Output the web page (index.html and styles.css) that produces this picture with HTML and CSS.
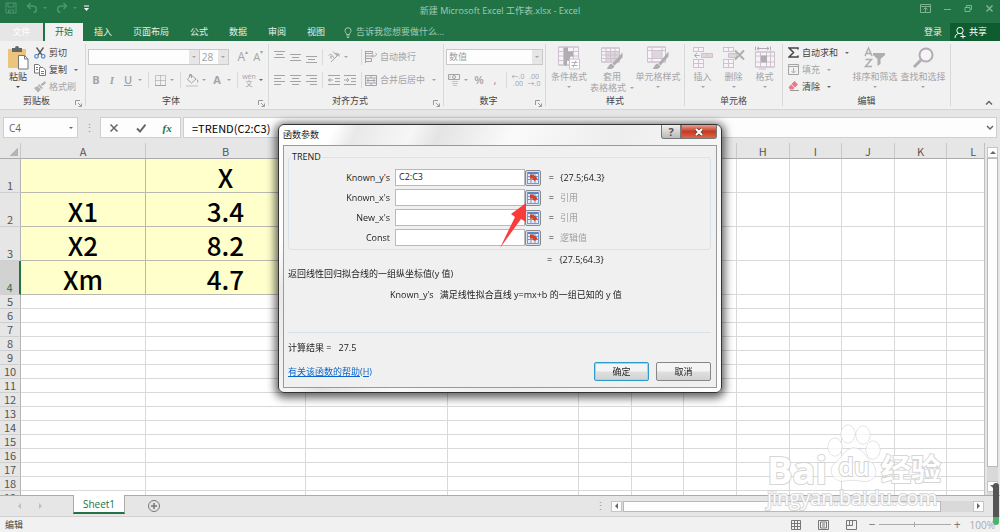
FILE: index.html
```html
<!DOCTYPE html>
<html lang="zh-CN">
<head>
    <meta charset="UTF-8">
    <meta name="viewport" content="width=device-width, initial-scale=1.0">
    <title>新建 Microsoft Excel 工作表.xlsx - Excel</title>
    <link rel="stylesheet" href="styles.css">
</head>
<body>
    <header class="titlebar">
        <div class="quick">
            <button class="qbtn" title="保存"><svg width="12" height="12" viewBox="0 0 12 12"><path d="M1 1h10v10H1zM3 1v4h6V1M3.500 11V8h5v3M5 9v2"/></svg></button>
            <button class="qbtn" title="撤消"><svg width="12" height="12" viewBox="0 0 12 12"><path d="M4.500 1L1.500 4l3 3M1.500 4h5c5 0 5 6 1 6.500" stroke-width="1.500"/></svg></button>
            <i class="caret"></i>
            <button class="qbtn redo" title="恢复"><svg width="12" height="12" viewBox="0 0 12 12"><path d="M7.500 1l3 3-3 3M10.500 4h-5c-5 0-5 6-1 6.500" stroke-width="1.500"/></svg></button>
            <i class="caret"></i>
            <button class="qbtn custom" title="自定义"><svg width="7" height="7" viewBox="0 0 7 7"><path d="M1 1h5"/><path class="solid" d="M1 3h5L3.500 6z"/></svg></button>
        </div>
        <h1 class="doc-title">新建 Microsoft Excel 工作表.xlsx - Excel</h1>
        <div class="winbtns">
            <button class="qbtn" title="功能区显示选项"><svg width="11" height="9" viewBox="0 0 11 9"><path d="M.5.5h10v8H.5zM.5 2.500h10M5.500 8V4M3.500 5.500l2-2 2 2"/></svg></button>
            <button class="qbtn" title="最小化"><svg width="9" height="9" viewBox="0 0 9 9"><path d="M1 5.500h7"/></svg></button>
            <button class="qbtn" title="还原"><svg width="9" height="9" viewBox="0 0 9 9"><path d="M1 3.500h5v4H1zM2.500 3V1.500h5v4H6.500"/></svg></button>
            <button class="qbtn" title="关闭"><svg width="9" height="9" viewBox="0 0 9 9"><path d="M1.500 1.500l6 6M7.500 1.500l-6 6" stroke-width="1.500"/></svg></button>
        </div>
    </header>

    <nav class="tabs">
        <button class="tab file">文件</button>
        <button class="tab active">开始</button>
        <button class="tab">插入</button>
        <button class="tab">页面布局</button>
        <button class="tab">公式</button>
        <button class="tab">数据</button>
        <button class="tab">审阅</button>
        <button class="tab">视图</button>
        <button class="tell"><svg width="8" height="11" viewBox="0 0 8 11"><path d="M2.500 7.500C2.500 6 1 5.500 1 3.700a3 3 0 0 1 6 0C7 5.500 5.500 6 5.500 7.500zM2.500 9h3M3 10.500h2"/></svg>告诉我您想要做什么...</button>
        <button class="login">登录</button>
        <button class="share"><svg width="12" height="13" viewBox="0 0 12 13"><circle cx="6" cy="4.500" r="3.200"/><path d="M1 12c0-3 2-4 3.500-4.500M7 7.500c1 .2 1.500.5 2 1M6.500 10.500h5M9 8.500v4"/></svg>共享</button>
    </nav>

    <section class="ribbon">
        <div class="group">
            <div class="body">
                <button class="big paste dark">
                    <svg width="22" height="24" viewBox="0 0 22 24"><path fill="#edc47c" d="M1 3h18v19H1z"/><path fill="#666" d="M5 2h3a2 2 0 0 1 4 0h3v4H5z"/><path fill="#fff" class="sheet-line" d="M11.500 9.500h6l3.500 3.500v10h-9.500z"/><path class="sheet-line" d="M17.500 9.500V13H21"/></svg>
                    <span>粘贴</span><i class="caret"></i>
                </button>
                <div class="stack">
                    <button class="row dark"><svg width="12" height="12" viewBox="0 0 12 12"><path fill="none" stroke="#555" stroke-width="1.300" d="M2.500.5L8 8M9.500.5L4 8"/><g fill="none" stroke="#4a86c5" stroke-width="1.200"><circle cx="2.500" cy="9.300" r="1.800"/><circle cx="9.200" cy="9.300" r="1.800"/></g></svg>剪切</button>
                    <button class="row dark"><svg width="12" height="12" viewBox="0 0 12 12"><path fill="#fff" stroke="#777" d="M.5.5h4l2 2V9h-6z"/><path fill="#fff" stroke="#777" d="M5.500 3.500h3.500l2.500 2.500v5.500h-6z"/><path stroke="#4a86c5" d="M2 3.500h2M2 5.500h2M7 7.500h3M7 9.500h3"/></svg>复制<i class="caret"></i></button>
                    <button class="row"><svg width="12" height="12" viewBox="0 0 12 12"><path fill="#b5b0b5" stroke="none" d="M11 0l1 2-3.500 3-2-1.500zM5 3l4 4-1.500 1L4 4.500zM3.500 5L7 8.500 4 11.500 0 7z"/></svg>格式刷</button>
                </div>
            </div>
            <footer class="dark has-launch">剪贴板<svg class="launch" width="7" height="7" viewBox="0 0 7 7"><path d="M.5 5V.5H5M3 3l3 3M6.500 3.500v3h-3"/></svg></footer>
        </div>

        <div class="group">
            <div class="body lines">
                <div class="line">
                    <span class="combo font-name"><select aria-label="字体" disabled><option></option></select><b><i class="caret"></i></b></span>
                    <span class="combo font-size"><select aria-label="字号" disabled><option>28</option></select><b><i class="caret"></i></b></span>
                    <button class="tool grow" title="增大字号">A<sup>▴</sup></button>
                    <button class="tool shrink" title="减小字号">A<sup>▾</sup></button>
                </div>
                <div class="line">
                    <button class="tool bold">B</button>
                    <button class="tool italic">I</button>
                    <button class="tool under">U</button>
                    <i class="drop"></i><i class="sep"></i>
                    <button class="tool" title="边框"><svg width="11" height="11" viewBox="0 0 11 11"><path d="M.5.5h10v10H.5zM0 5.500h11M5.500 0v10" opacity="0.6"/><path d="M0 10.500h11"/></svg></button>
                    <i class="drop"></i><i class="sep"></i>
                    <button class="tool" title="填充颜色"><svg width="13" height="13" viewBox="0 0 13 13"><path d="M5 1l5 4-4.500 4L1.500 5.500zM3.500 3V.500h2V4M11 5.500c2 2.500 0 3 0 3"/><path stroke="#ddd6dd" stroke-width="2" d="M0 12h12"/></svg></button>
                    <i class="drop"></i>
                    <button class="tool color-a">A</button>
                    <i class="drop"></i><i class="sep"></i>
                    <button class="tool pinyin" title="拼音"><small>wén</small><small>文</small></button>
                    <i class="drop on"></i>
                </div>
            </div>
            <footer class="dark has-launch">字体<svg class="launch" width="7" height="7" viewBox="0 0 7 7"><path d="M.5 5V.5H5M3 3l3 3M6.500 3.500v3h-3"/></svg></footer>
        </div>

        <div class="group">
            <div class="body lines">
                <div class="line">
                    <button class="tool" title="顶端对齐"><svg width="11" height="12" viewBox="0 0 11 12"><path d="M0 .5h11M2 3.500h7M0 6.500h11"/></svg></button>
                    <button class="tool" title="垂直居中"><svg width="11" height="12" viewBox="0 0 11 12"><path d="M0 3.500h11M2 6.500h7M0 9.500h11"/></svg></button>
                    <button class="tool" title="底端对齐"><svg width="11" height="12" viewBox="0 0 11 12"><path d="M0 5.500h11M2 8.500h7M0 11.500h11"/></svg></button>
                    <i class="sep"></i>
                    <span class="pair"><button class="tool" title="方向"><svg width="12" height="12" viewBox="0 0 12 12"><path d="M3 11l8-8M8.500 3H11v2.500M1 4.500c1-2 3-1 3.500.5L6 7M4 5.500C1.500 5 2 8 4 7M5 .5l4 4M7 3c1-2 3 0 1.500 1.500"/></svg></button><i class="drop"></i></span>
                    <i class="sep"></i>
                    <button class="row"><svg width="12" height="12" viewBox="0 0 12 12"><path d="M.5 0v12M.5.5h7v2h-7M.5 5h9c2.500 0 2.500-2.500 1-3M.5 7.500h6v3h-6M8 3.500L6.500 5 8 6.500"/></svg>自动换行</button>
                </div>
                <div class="line">
                    <button class="tool" title="左对齐"><svg width="11" height="10" viewBox="0 0 11 10"><path d="M0 .5h11M0 3.500h7M0 6.500h11M0 9.500h7"/></svg></button>
                    <button class="tool" title="居中"><svg width="11" height="10" viewBox="0 0 11 10"><path d="M0 .5h11M2 3.500h7M0 6.500h11M2 9.500h7"/></svg></button>
                    <button class="tool" title="右对齐"><svg width="11" height="10" viewBox="0 0 11 10"><path d="M0 .5h11M4 3.500h7M0 6.500h11M4 9.500h7"/></svg></button>
                    <i class="sep"></i>
                    <span class="pair"><button class="tool" title="减少缩进量"><svg width="12" height="10" viewBox="0 0 12 10"><path d="M0 .5h12M7 3.500h5M7 6.500h5M0 9.500h12M0 5h5M2.500 3L.5 5l2 2"/></svg></button><button class="tool" title="增加缩进量"><svg width="12" height="10" viewBox="0 0 12 10"><path d="M0 .5h12M7 3.500h5M7 6.500h5M0 9.500h12M0 5h5M3 3l2 2-2 2"/></svg></button></span>
                    <i class="sep"></i>
                    <button class="row"><svg width="12" height="11" viewBox="0 0 12 11"><path d="M.5.5h11v10H.5zM.5 3h11M.5 8h11M6 .5V3M6 8v2.500M2 5.500h8M3.500 4L2 5.500 3.500 7M8.500 4L10 5.500 8.500 7"/></svg>合并后居中<i class="caret"></i></button>
                </div>
            </div>
            <footer class="dark has-launch">对齐方式<svg class="launch" width="7" height="7" viewBox="0 0 7 7"><path d="M.5 5V.5H5M3 3l3 3M6.500 3.500v3h-3"/></svg></footer>
        </div>

        <div class="group">
            <div class="body lines">
                <div class="line">
                    <span class="combo number"><select aria-label="数字格式" disabled><option>数值</option></select><b><i class="caret"></i></b></span>
                </div>
                <div class="line">
                    <button class="tool" title="会计数字格式"><svg width="12" height="12" viewBox="0 0 12 12"><path d="M.5.5h11v5H.5z"/><circle cx="6" cy="3" r="1.500"/><path d="M4 7.500h6M4 9.500h6M5 11.500h4M2 1.500v3" opacity="0.6"/></svg></button>
                    <i class="drop"></i>
                    <button class="tool percent">%</button>
                    <button class="tool comma">,</button>
                    <i class="sep"></i>
                    <button class="tool decimal"><small>←.0</small><small>.00</small></button>
                    <button class="tool decimal"><small>.00</small><small>→.0</small></button>
                </div>
            </div>
            <footer class="dark has-launch">数字<svg class="launch" width="7" height="7" viewBox="0 0 7 7"><path d="M.5 5V.5H5M3 3l3 3M6.500 3.500v3h-3"/></svg></footer>
        </div>

        <div class="group">
            <div class="body">
                <button class="big cond"><svg width="22" height="23" viewBox="0 0 22 23"><path fill="#f8f3f8" d="M.5.500h20v18H.5z"/><path d="M.5.500h20v18H.5zM.5 5h20M.5 9.500h20M.5 14h20M5.500.5v18M15.500.5v18"/><path class="fill" d="M6 1h4v4H6zM6 5h9v5H6zM6 10h6v4H6zM6 14h3v5H6z"/><path fill="#fff" d="M11.500 12.500h10v10h-10z"/><path class="strong" d="M13.500 16h6M13.500 19h6M18 14l-3 7"/></svg><span>条件格式</span><i class="caret"></i></button>
                <button class="big format"><svg width="22" height="23" viewBox="0 0 22 23"><path fill="#f8f3f8" d="M.5 1.500h18v14H.5z"/><path class="pale" d="M5 5h13v10H5z"/><path d="M.5 1.500h18v14H.5zM.5 5h18M.5 8.500h18M.5 12h18M5 1.500v14M9.500 1.500v14M14 1.500v14"/><path class="fill" d="M21.500 6v5l-8 8-2-2zM10.500 17l3 3c-2 3-5 3-8 2 2-1 2-4 5-5z"/></svg><span>套用</span><span>表格格式<i class="caret"></i></span></button>
                <button class="big cellstyle"><svg width="22" height="23" viewBox="0 0 22 23"><path fill="#f8f3f8" d="M.5.500h18v15H.5z"/><path class="pale" d="M5 4h10v8H5z"/><path d="M.5.500h18v15H.5zM.5 4h18M.5 12h18M5 .5v15M15 .5v15"/><path class="fill" d="M21.500 5v5l-8 9-2-2zM10.500 17l3 3c-2 3-5 3-8 2 2-1 2-4 5-5z"/></svg><span>单元格样式</span><i class="caret"></i></button>
            </div>
            <footer class="dark">样式</footer>
        </div>

        <div class="group">
            <div class="body">
                <button class="big cell"><svg width="20" height="22" viewBox="0 0 20 22"><path fill="#f8f3f8" d="M.5.500h10v4H.5zM.5 12.500h10v8H.5z"/><path d="M.5.500h10v4H.5zM5.500.5v4M.5 12.500h10v8H.5zM5.500 12.500v8M.5 16.500h10"/><path class="pale" d="M8.500 6.500h11v4h-11z"/><path d="M8.500 6.500h11v4h-11zM14 6.500v4"/><path class="strong" d="M1.500 8.500h5M4 6L1.500 8.500 4 11"/></svg><span>插入</span><i class="caret"></i></button>
                <button class="big cell"><svg width="22" height="22" viewBox="0 0 22 22"><path fill="#f8f3f8" d="M.5.500h10v4H.5zM.5 12.500h10v8H.5z"/><path d="M.5.500h10v4H.5zM5.500.5v4M.5 12.500h10v8H.5zM5.500 12.500v8M.5 16.500h10"/><path class="pale" d="M5 6.500h9v4H5z"/><path d="M5.500 6.500h8v4h-8z"/><path class="strong thick" d="M12 3.500l9 9M21 3.500l-9 9"/></svg><span>删除</span><i class="caret"></i></button>
                <button class="big cell"><svg width="20" height="23" viewBox="0 0 20 23"><path class="strong" d="M.5 0v4M15.500 0v4M2 2h12M4 .5L2 2l2 1.500M12 .5L14 2l-2 1.500"/><path fill="#f8f3f8" d="M.5 5.500h19v15H.5z"/><path d="M.5 5.500h19v15H.5zM.5 9.500h19M.5 15.500h19M5.500 5.500v15M11.500 5.500v15M15.500 5.500v15M4 22.500h7"/><path class="fill" d="M6 9h6v7H6z"/></svg><span>格式</span><i class="caret"></i></button>
            </div>
            <footer class="dark">单元格</footer>
        </div>

        <div class="group">
            <div class="body">
                <div class="stack edit">
                    <button class="row dark"><svg width="11" height="11" viewBox="0 0 11 11"><path fill="none" stroke="#444" stroke-width="1.500" d="M10 2.500V1H1l4.500 4.500L1 10h9V8.500"/></svg>自动求和<i class="caret"></i></button>
                    <button class="row"><svg width="11" height="11" viewBox="0 0 11 11"><path d="M.5.500h10v10H.5zM.5 2.500h10"/><path class="strong" d="M5.500 4v5M3.500 7l2 2 2-2"/></svg>填充<i class="caret"></i></button>
                    <button class="row dark"><svg width="11" height="11" viewBox="0 0 11 11"><path fill="#e8788a" stroke="none" d="M6.500 0L10 3.500 7 6.500 3.500 3z"/><path fill="#e8788a" stroke="none" d="M3 3.500L6.500 7 5 8.500H2L.5 6.500z"/><path stroke="#999" d="M2 9.500h9"/></svg>清除<i class="caret"></i></button>
                </div>
                <button class="big find"><svg width="22" height="22" viewBox="0 0 22 22"><path class="strong" stroke-width="1.500" d="M1 9l3.500-8L8 9M2.500 6.500h4M1.500 12.500h6l-6 7h6.500"/><path class="fill" d="M9 6h12v2l-4.500 4v5l-3 2v-7L9 8z"/></svg><span>排序和筛选</span><i class="caret"></i></button>
                <button class="big find"><svg width="22" height="22" viewBox="0 0 22 22"><circle cx="14" cy="8" r="6.500" fill="#f8f3f8" class="strong thick"/><path class="strong" stroke-width="3" d="M9 13l-7 7"/></svg><span>查找和选择</span><i class="caret"></i></button>
            </div>
            <footer class="dark">编辑</footer>
        </div>
        <button class="collapse" title="折叠功能区"><svg width="8" height="6" viewBox="0 0 8 6"><path d="M1 4.500l3-3 3 3" stroke-width="1.500"/></svg></button>
    </section>

    <section class="formula-bar">
        <div class="name-box"><input aria-label="名称框" value="C4"><i class="caret"></i></div>
        <span class="grip">⋮</span>
        <div class="fx-buttons">
            <button title="取消"><svg width="10" height="10" viewBox="0 0 10 10"><path d="M1.500 1.500l7 7M8.500 1.500l-7 7" stroke-width="1.500"/></svg></button>
            <button title="输入"><svg width="10" height="10" viewBox="0 0 10 10"><path d="M1 5.500L4 8.500 9.500 1.500" stroke-width="2"/></svg></button>
            <button class="fx" title="插入函数">fx</button>
        </div>
        <div class="formula"><input aria-label="编辑栏" value="=TREND(C2:C3)"><svg width="8" height="6" viewBox="0 0 8 6"><path d="M1 1l3 3 3-3" stroke-width="1.500"/></svg></div>
    </section>

    <main class="workbook">
        <div class="sheet">
            <table>
                <colgroup><col class="c-num"><col class="c-a"><col class="c-b"><col class="c-c"><col class="c-d"><col><col><col><col><col><col><col><col></colgroup>
                <thead>
                    <tr><th class="corner"></th><th>A</th><th>B</th><th>C</th><th>D</th><th>E</th><th>F</th><th>G</th><th>H</th><th>I</th><th>J</th><th>K</th><th>L</th></tr>
                </thead>
                <tbody id="rows"></tbody>
            </table>
        </div>
        <div class="vscroll">
            <button class="arrow" title="向上"><i class="tri up"></i></button>
            <span class="thumb"></span>
            <button class="arrow" title="向下"><i class="tri down"></i></button>
        </div>
    </main>

    <section class="sheetbar">
        <button class="nav" title="上一个"><i class="tri left"></i></button>
        <button class="nav" title="下一个"><i class="tri right"></i></button>
        <button class="sheet-tab">Sheet1</button>
        <button class="add" title="新工作表"><svg width="12" height="12" viewBox="0 0 12 12"><circle cx="6" cy="6" r="5.500"/><path stroke-width="1.500" d="M6 3v6M3 6h6"/></svg></button>
        <span class="grip">⋮</span>
        <div class="hscroll">
            <button class="arrow" title="向左"><i class="tri left"></i></button>
            <span class="thumb"></span>
            <button class="arrow" title="向右"><i class="tri right"></i></button>
        </div>
    </section>

    <footer class="status">
        <span class="mode">编辑</span>
        <button title="普通"><svg width="10" height="10" viewBox="0 0 10 10"><path d="M.5.500h9v9h-9zM.5 3.500h9M.5 6.500h9M3.500.5v9M6.500.5v9"/></svg></button>
        <button title="页面布局"><svg width="11" height="10" viewBox="0 0 11 10"><path d="M.5.500h10v9H.5zM2.500 2v6h6V2zM4 4h3M4 6h3"/></svg></button>
        <button title="分页预览"><svg width="11" height="10" viewBox="0 0 11 10"><path d="M.5.500h10v9H.5zM3.500.5v5h3v-5M.5 5.500h6"/></svg></button>
        <div class="zoom"><span>−</span><i class="rail"></i><span>+</span></div>
        <span class="pct">100%</span>
    </footer>

    <div class="watermark">
        <div class="brand">
            <span>Bai</span>
            <svg width="54" height="60" viewBox="0 0 54 60"><ellipse cx="8" cy="24" rx="7" ry="9"/><ellipse cx="21" cy="11" rx="7" ry="9"/><ellipse cx="36" cy="12" rx="7" ry="9"/><ellipse cx="46" cy="27" rx="7" ry="9"/><path d="M27 25c-9 0-12 10-19 15-7 6-3 17 6 18 5 0 9-1 13-1s9 2 14 1c9-2 10-12 4-18-6-5-9-15-18-15z"/><text x="27" y="53" text-anchor="middle">du</text></svg>
            <span class="cn">经验</span>
        </div>
        <div class="site">jingyan.baidu.com</div>
    </div>
    <div class="pill"></div>

    <form class="dialog" role="dialog" aria-labelledby="dlg-title">
        <div class="dlg-head">
            <h2 id="dlg-title">函数参数</h2>
            <button type="button" class="help">?</button>
            <button type="button" class="close" title="关闭"><svg width="10" height="8" viewBox="0 0 10 8"><path d="M2 1l6 6M8 1L2 7" stroke="#65382f" stroke-width="3.500"/><path d="M2 1l6 6M8 1L2 7" stroke="#fff" stroke-width="2"/></svg></button>
        </div>
        <div class="dlg-body">
            <fieldset>
                <legend>TREND</legend>
                <div class="arg"><label for="ky">Known_y's</label><input id="ky" value="C2:C3" autofocus><button type="button" class="pick" title="选择区域"><svg width="12" height="12"><use href="#ref"/></svg></button><b>=</b><output>{27.5;64.3}</output></div>
                <div class="arg"><label for="kx">Known_x's</label><input id="kx"><button type="button" class="pick" title="选择区域"><svg width="12" height="12"><use href="#ref"/></svg></button><b>=</b><output class="hint">引用</output></div>
                <div class="arg"><label for="nx">New_x's</label><input id="nx"><button type="button" class="pick" title="选择区域"><svg width="12" height="12"><use href="#ref"/></svg></button><b>=</b><output class="hint">引用</output></div>
                <div class="arg"><label for="co">Const</label><input id="co"><button type="button" class="pick" title="选择区域"><svg width="12" height="12"><use href="#ref"/></svg></button><b>=</b><output class="hint">逻辑值</output></div>
            </fieldset>
            <div class="total"><b>=</b><output>{27.5;64.3}</output></div>
            <p class="about">返回线性回归拟合线的一组纵坐标值(y 值)</p>
            <p class="arg-help"><span>Known_y's</span><span>满足线性拟合直线 y=mx+b 的一组已知的 y 值</span></p>
            <p class="answer">计算结果 =<span>27.5</span></p>
            <div class="actions">
                <a href="#">有关该函数的帮助(H)</a>
                <button type="submit" class="btn primary">确定</button>
                <button type="button" class="btn">取消</button>
            </div>
        </div>
        <svg class="pointer" width="28" height="46" viewBox="0 0 28 46"><path d="M26 0L11 11l4 3L0 45l21-29 5 3z"/></svg>
    </form>

    <svg class="defs" width="0" height="0">
        <symbol id="ref" viewBox="0 0 12 12">
            <path fill="#e3ecf8" d="M0 0h12v12H0z"/>
            <path fill="#5d86c4" d="M0 0h12v2H0z"/>
            <path fill="none" stroke="#7599d0" d="M.5 0v12M4 2v10M8 2v10M11.500 0v12M0 4.500h12M0 7.500h12M0 11.500h12"/>
            <path fill="#d9401f" d="M3 2.500h4v2l1-1 2.500 3L8 9 5.500 7.500 6 6.500H3z"/>
        </symbol>
    </svg>

    <script>
const data = [
    ["", "X"],
    ["X1", "3.4"],
    ["X2", "8.2"],
    ["Xm", "4.7"]
];
const columnCount = 12;
const rowCount = 19;
const rows = document.getElementById("rows");

for (let r = 0; r < rowCount; r++) {
    const tr = rows.insertRow();
    const head = document.createElement("th");
    head.textContent = r + 1;
    tr.appendChild(head);
    if (r < data.length) tr.className = "tall";
    if (r === 3) tr.classList.add("current");
    for (let c = 0; c < columnCount; c++) {
        const td = tr.insertCell();
        // the first three columns hold the shaded table
        if (r < data.length && c < 3) {
            td.className = "shaded";
            td.textContent = data[r][c] || "";
        }
    }
}

const known = document.getElementById("ky");
known.setSelectionRange(known.value.length, known.value.length);
    </script>
</body>
</html>
```
FILE: styles.css
```css
* {
  box-sizing: border-box;
}

body {
  margin: 0;
  height: 100vh;
  display: flex;
  flex-direction: column;
  overflow: hidden;
  background: #e6e6e6;
  color: #444;
  font-family: "Open Sans", "Noto Sans CJK SC", sans-serif;
  font-size: 9px;
  line-height: 12px;
}

button, input, select {
  font: inherit;
  color: inherit;
  margin: 0;
  padding: 0;
  border: none;
  outline: none;
  background: none;
}

h1, h2, p {
  margin: 0;
  font-size: inherit;
  font-weight: normal;
}

svg {
  flex: none;
  fill: none;
  stroke: currentColor;
}

.defs {
  position: absolute;
}

.caret {
  flex: none;
  display: inline-block;
  border: 2px solid transparent;
  border-top-color: currentColor;
  border-bottom: none;
}

.dark {
  color: #444;
}

/* title bar */
.titlebar {
  display: grid;
  grid-template-columns: 1fr auto 1fr;
  align-items: start;
  height: 23px;
  background: #217346;
  color: #7db393;
}

.quick, .winbtns {
  display: flex;
  align-items: center;
  height: 16px;
}

.quick {
  gap: 5px;
  padding-left: 5px;
  color: #4f9470;
}

.qbtn {
  display: flex;
}

.quick .qbtn:nth-child(2) {
  margin-left: 4px;
}

.quick .redo {
  margin-left: 4px;
}

.quick .custom {
  margin-left: 1px;
  color: #fff;
}

.solid {
  fill: currentColor;
  stroke: none;
}

.doc-title {
  padding-top: 5px;
  color: #a3cab3;
}

.winbtns {
  justify-content: flex-end;
  gap: 12px;
  padding-right: 6px;
}

/* ribbon tabs */
.tabs {
  display: flex;
  align-items: stretch;
  gap: 1px;
  height: 18px;
  background: #217346;
  color: #e4f1ea;
}

.tab {
  padding: 0 10px;
}

.tab.file {
  width: 43px;
  margin-right: 1px;
  background: #e6e6e6;
  color: #fff;
}

.tab.active {
  background: #f1f1f1;
  color: #217346;
}

.tell {
  display: flex;
  align-items: center;
  gap: 4px;
  padding-left: 8px;
  color: #a3cab3;
}

.login {
  margin-left: auto;
  padding: 0 7px;
}

.share {
  display: flex;
  align-items: center;
  gap: 3px;
  width: 50px;
  padding-left: 4px;
  background: #0e5c2f;
  color: #fff;
}

/* ribbon */
.ribbon {
  display: grid;
  grid-template-columns: 86px 183px 175px 102px 139px 98px 168px 1fr;
  height: 69px;
  padding-top: 3px;
  background: #f1f1f1;
  border-bottom: 1px solid #d5d5d5;
  color: #a6a3a6;
}

.group {
  display: flex;
  flex-direction: column;
  margin-bottom: 3px;
  border-right: 1px solid #d8d8d8;
  padding: 0 2px;
}

.body {
  display: flex;
  flex: 1;
}

.group footer {
  position: relative;
  height: 12px;
  margin-bottom: -1px;
  text-align: center;
}

.group .has-launch {
  padding-right: 12px;
}

.launch {
  position: absolute;
  right: 1px;
  bottom: 0;
  color: #999;
}

.big {
  display: flex;
  flex-direction: column;
  align-items: center;
  padding-top: 2px;
  white-space: nowrap;
}

.big svg {
  height: 24px;
  margin-bottom: 1px;
  stroke: #cdc2cd;
}

.big svg .fill {
  fill: #b0adb0;
  stroke: none;
}

.big svg .pale {
  fill: #ddd6dd;
  stroke: none;
}

svg .strong {
  stroke: #b0adb0;
}

svg .thick {
  stroke-width: 2;
}

.big > span {
  line-height: 11px;
}

.big > .caret {
  margin-top: 4px;
}

.big span .caret {
  margin: 0 0 2px 4px;
}

.big.paste svg {
  stroke: none;
}

.sheet-line {
  stroke: #777;
}

.paste { width: 32px; }
.cond { width: 42px; }
.format { width: 44px; }
.cellstyle { width: 48px; }
.cell { width: 31px; }
.find { width: 48px; }

.stack {
  display: flex;
  flex-direction: column;
}

.stack .row {
  height: 17px;
}

.stack.edit {
  width: 66px;
  padding-left: 3px;
}

.row {
  display: flex;
  align-items: center;
  gap: 3px;
  white-space: nowrap;
}

.row .caret {
  margin-left: 4px;
}

.lines {
  flex-direction: column;
  gap: 7px;
  padding-top: 5px;
}

.line {
  display: flex;
  align-items: center;
  height: 16px;
}

.tool {
  display: flex;
  align-items: center;
  justify-content: center;
  width: 16px;
  height: 16px;
  font-size: 11px;
}

.drop {
  width: 9px;
  padding-left: 2px;
}

.drop::before {
  content: "";
  display: block;
  width: 0;
  border: 2px solid transparent;
  border-top-color: currentColor;
  border-bottom: none;
}

.drop.on {
  color: #666;
}

.sep {
  width: 1px;
  height: 16px;
  margin: 0 3px;
  background: #dadada;
}

.pair {
  display: flex;
  align-items: center;
  width: 32px;
}

.bold { font-weight: bold; }
.italic { font-family: "Liberation Serif", serif; font-style: italic; font-weight: bold; }
.under { text-decoration: underline; font-weight: 600; }
.color-a { font-weight: bold; }
.percent, .comma { font-weight: 600; }

.grow {
  margin-left: 6px;
  font-size: 12px;
}

.tool sup {
  font-size: 6px;
  line-height: 6px;
  align-self: flex-start;
}

.pinyin, .decimal {
  flex-direction: column;
}

.tool small {
  font-size: 7px;
  line-height: 7px;
}

.combo {
  display: flex;
  height: 16px;
  border: 1px solid #c9c9c9;
  background: #fdfdfd;
}

.combo select {
  flex: 1;
  min-width: 0;
  appearance: none;
  padding-left: 2px;
  opacity: 1;
  color: #a0a0a0;
}

.combo b {
  display: flex;
  align-items: center;
  justify-content: center;
  width: 10px;
  background: #e6e6e6;
}

.font-name { width: 115px; }
.font-size { width: 31px; margin-left: -1px; font-size: 10px; }
.number { width: 97px; }

.collapse {
  align-self: end;
  justify-self: end;
  margin-right: 7px;
  color: #666;
}

/* formula bar */
.formula-bar {
  display: flex;
  height: 33px;
  padding: 7px 3px 5px;
  color: #666;
}

.name-box, .fx-buttons, .formula {
  display: flex;
  align-items: center;
  background: #fdfdfd;
  border: 1px solid #cfcfcf;
}

.name-box {
  width: 75px;
  padding-right: 4px;
}

.name-box input {
  flex: 1;
  min-width: 0;
  padding-left: 5px;
  font-size: 10px;
}

.name-box .caret, .row.dark .caret {
  color: #666;
}

.grip {
  width: 22px;
  align-self: center;
  text-align: center;
  font-size: 11px;
  color: #999;
}

.fx-buttons {
  width: 81px;
  margin-right: 2px;
  justify-content: space-around;
}

.fx-buttons button {
  display: flex;
}

.fx-buttons .fx {
  font: italic bold 11px "Liberation Serif", serif;
  color: #217346;
}

.formula {
  flex: 1;
  padding-right: 2px;
}

.formula input {
  flex: 1;
  min-width: 0;
  padding-left: 8px;
  font: 400 11px "Noto Sans CJK SC", sans-serif;
  color: #000;
}

/* sheet */
.workbook {
  display: flex;
  flex: 1;
  min-height: 0;
  border-bottom: 1px solid #ababab;
}

.sheet {
  flex: 1;
  overflow: hidden;
  background: #fff;
  border-right: 1px solid #c0c0c0;
}

/* the last column runs on under the scroll bar */
.sheet table {
  width: calc(100% + 16px);
  table-layout: fixed;
  border-spacing: 0;
  font-family: "Noto Sans CJK SC", sans-serif;
}

.c-num { width: 21px; }
.c-a { width: 125px; }
.c-b { width: 160px; }
.c-c { width: 142px; }
.c-d { width: 131px; }

.sheet th {
  padding: 0;
  background: #e6e6e6;
  border-right: 1px solid #b4b4b4;
  font-size: 11px;
  line-height: 13px;
  font-weight: normal;
  color: #555;
}

.sheet thead th {
  height: 16px;
  padding-top: 2px;
  border-right-color: #c8c8c8;
  border-bottom: 1px solid #ababab;
}

.sheet .corner {
  background: linear-gradient(135deg, transparent 50%, #b4b4b4 50%) 10px 5px / 8px 8px no-repeat #e6e6e6;
}

.sheet tbody th {
  height: 14px;
  border-bottom: 1px solid #cfcfcf;
  vertical-align: bottom;
}

.sheet td {
  padding: 0;
  border-right: 1px solid #d9d9d9;
  border-bottom: 1px solid #d9d9d9;
}

.sheet .tall th {
  height: 34px;
}

.sheet .shaded {
  padding-top: 2px;
  background: #ffffcc;
  border-color: #b9b9b0;
  color: #000;
  font-size: 26px;
  line-height: 31px;
  font-weight: 500;
  text-align: center;
}

.sheet .current th {
  background: #d2d2d2;
  border-right: 2px solid #217346;
  color: #217346;
}

.tri {
  display: block;
  width: 0;
  height: 0;
  border: 3px solid transparent;
}

.tri.up { border-bottom-color: #666; border-top: none; }
.tri.down { border-top-color: #666; border-bottom: none; }
.tri.left { border-right-color: #666; border-left: none; }
.tri.right { border-left-color: #666; border-right: none; }

.arrow {
  display: flex;
  align-items: center;
  justify-content: center;
  width: 11px;
  height: 11px;
  flex: none;
  background: #fdfdfd;
  border: 1px solid #c6c6c6;
}

.thumb {
  background: #fdfdfd;
  border: 1px solid #b9b9b9;
}

.vscroll {
  display: flex;
  flex-direction: column;
  width: 15px;
  padding: 4px 2px 3px;
  background: linear-gradient(#d9d9d9, #d9d9d9) center 100% / 11px 40px no-repeat;
}

.vscroll .thumb {
  flex: 1;
  width: 11px;
  margin-bottom: 14px;
}

/* sheet tabs */
.sheetbar {
  display: flex;
  align-items: center;
  height: 20px;
}

.nav {
  width: 21px;
  padding-left: 18px;
  opacity: 0.3;
}

.sheet-tab {
  align-self: flex-start;
  width: 52px;
  height: 19px;
  margin: -1px 23px 0 31px;
  background: #fff;
  border: 1px solid #ababab;
  border-top: none;
  border-bottom: 2px solid #217346;
  font-size: 10px;
  color: #217346;
}

.add {
  display: flex;
  color: #777;
}

.sheetbar .grip {
  margin-left: auto;
}

.hscroll {
  display: flex;
  flex: 0 0 373px;
  margin-right: 16px;
  background: #d9d9d9;
}

.hscroll .thumb {
  flex: 1;
  margin: 0 32px 0 1px;
}

/* status bar */
.status {
  display: flex;
  align-items: center;
  gap: 17px;
  height: 16px;
  padding: 0 5px;
  background: #f1f1f1;
  border-top: 1px solid #d0d0d0;
}

.status button {
  display: flex;
  color: #777;
}

.mode {
  margin-right: auto;
}

.zoom {
  display: flex;
  align-items: center;
  gap: 3px;
  margin-left: -5px;
  font-size: 12px;
  color: #777;
}

.rail {
  width: 72px;
  height: 5px;
  background: linear-gradient(#aaa, #aaa) center / 1px 5px no-repeat, linear-gradient(#aaa, #aaa) center / 100% 1px no-repeat;
}

.pct {
  margin-left: -8px;
  font-size: 10px;
  color: #aaa;
}

.pill {
  position: absolute;
  right: 1px;
  bottom: 7px;
  width: 6px;
  height: 42px;
  border-radius: 3px;
  background: linear-gradient(#555 80%, #4bb269 80%);
}

/* watermark */
.watermark {
  position: absolute;
  right: 50px;
  bottom: 24px;
  width: 183px;
  font-family: "Open Sans", "Noto Sans CJK SC", sans-serif;
  color: #fff;
  -webkit-text-stroke: 2px #d2d2d2;
  paint-order: stroke fill;
  opacity: 0.9;
}

.brand {
  display: flex;
  align-items: flex-end;
  height: 60px;
  margin-bottom: 5px;
  font-size: 38px;
  line-height: 28px;
  font-weight: bold;
}

.brand svg {
  fill: rgba(255, 255, 255, 0.8);
  stroke: #cfcfcf;
}

.brand text {
  fill: #fff;
  stroke: #cfcfcf;
  stroke-width: 2px;
  paint-order: stroke fill;
  font-size: 25px;
  font-weight: 600;
}

.brand .cn {
  font-size: 30px;
}

.site {
  font-size: 20px;
  line-height: 20px;
}

/* function arguments dialog */
.dialog {
  position: absolute;
  left: 278px;
  top: 124px;
  width: 444px;
  padding: 0 4px 4px;
  border: 1px solid #333;
  border-radius: 6px;
  background: linear-gradient(115deg, #fff 10%, #e9e9e9 14%, #f6f6f6 24%, #e4e4e4 29%, #fafafa 42%, #eee 60%, #fff 100%);
  box-shadow: 0 2px 9px 3px rgba(0, 0, 0, 0.6);
  color: #1c1c1c;
}

.dlg-head {
  display: flex;
  align-items: flex-start;
  height: 20px;
}

.dlg-head h2 {
  flex: 1;
  padding-top: 4px;
}

.dlg-head button {
  display: flex;
  align-items: center;
  justify-content: center;
  height: 14px;
  border: 1px solid #777;
  border-top: none;
}

.help {
  width: 20px;
  background: linear-gradient(#eee, #bbb);
  border-radius: 0 0 0 3px;
  font-weight: bold;
  font-size: 11px;
  color: #555;
}

.close {
  width: 36px;
  background: linear-gradient(#e8a193, #c53a22 50%, #d9694c);
  border-radius: 0 0 3px 0;
}

.dlg-body {
  padding: 5px 5px 6px 4px;
  background: #f0f0f0;
  border: 1px solid #999;
}

.dialog b {
  font-weight: normal;
}

fieldset {
  margin: 0;
  padding: 6px 0 0;
  border: 1px solid #dbe2e8;
  border-radius: 3px;
}

legend {
  margin-left: 2px;
  padding: 0 1px;
}

.arg {
  display: grid;
  grid-template-columns: 101px 130px 16px 18px 1fr;
  align-items: center;
  margin-bottom: 3px;
}

.arg label {
  text-align: right;
}

.arg input {
  height: 17px;
  margin-left: 5px;
  margin-right: -5px;
  padding: 0 3px 2px;
  background: #fff;
  border: 1px solid #b7b9be;
}

.arg .pick {
  display: flex;
  align-items: center;
  justify-content: center;
  width: 16px;
  height: 16px;
  margin-left: 5px;
  border: 1px solid #8a8a8a;
  border-radius: 2px;
  background: #dde3ea;
}

.pick svg {
  stroke: none;
}

.arg b {
  text-align: right;
}

.arg output {
  padding-left: 6px;
}

.hint {
  color: #a0a0a0;
}

.total {
  display: flex;
  gap: 7px;
  padding: 4px 0 2px 259px;
}

.about {
  padding-bottom: 9px;
}

.arg-help {
  display: flex;
  gap: 6px;
  padding: 0 0 31px 102px;
  border-bottom: 1px solid #d8e0e6;
}

.answer {
  padding: 9px 0 8px;
}

.answer span {
  padding-left: 7px;
}

.actions {
  display: flex;
  align-items: center;
  gap: 7px;
}

.actions a {
  margin-right: auto;
  color: #0a66cc;
}

.btn {
  width: 55px;
  height: 19px;
  border: 1px solid #868686;
  border-radius: 2px;
  background: linear-gradient(#f4f4f4 45%, #dedede 55%, #d2d2d2);
}

.btn.primary {
  border-color: #2b9cc9;
  box-shadow: inset 0 0 0 1px #8fdcf5;
}

.pointer {
  position: absolute;
  left: 221px;
  top: 78px;
  stroke: none;
  fill: #fb3a3a;
}
```
